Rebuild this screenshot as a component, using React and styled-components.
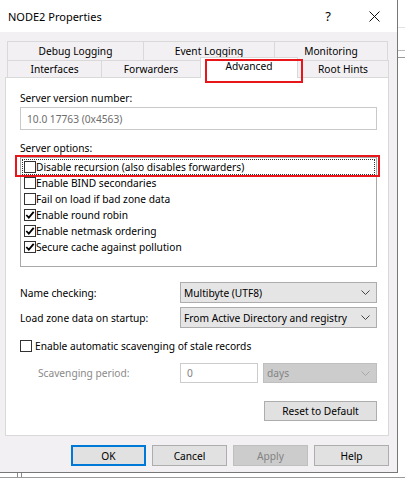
import React from 'react';
import styled, { createGlobalStyle, css } from 'styled-components';

const GlobalStyle = createGlobalStyle`
  body {
    margin: 0;
    background: #ffffff;
    font-family: "Noto Sans", "Open Sans", sans-serif;
    font-size: 10.2px;
    color: #000;
  }
`;

const Screen = styled.div`
  width: 405px;
  height: 479px;
  overflow: hidden;
  display: flex;
  flex-direction: column;
  background: #fff;
`;

const TopArea = styled.div`
  display: flex;
`;

const Dialog = styled.div`
  width: 397px;
  height: 472px;
  background: #f3f0f3;
  border-right: 1px solid #777777;
  border-bottom: 1px solid #777777;
  display: flex;
  flex-direction: column;
`;

// strip of the window that sits behind the dialog
const BackRight = styled.div`
  flex: 1;
  display: flex;
  flex-direction: column;
`;

const BackLine = styled.div`
  height: ${p => p.$h}px;
  border-bottom: 1px solid ${p => p.$c};
`;

const BackBottom = styled.div`
  flex: 1;
  display: flex;
  border-bottom: 1px solid #9a9a9a;
  margin-bottom: 1px;
`;

const BackCol = styled.div`
  width: ${p => p.$w}px;
  border-right: 1px solid #8a8a8a;
`;

const TitleBar = styled.div`
  height: 32px;
  background: #ffffff;
  display: flex;
  align-items: center;
  padding-left: 8px;
`;

const Title = styled.div`
  flex: 1;
  font-size: 11px;
`;

const CaptionButton = styled.div`
  width: 46px;
  height: 32px;
  display: flex;
  align-items: center;
  justify-content: center;
  font-size: 13px;
`;

const Body = styled.div`
  padding: 9px 8px 0 5px;
  display: flex;
  flex-direction: column;
`;

const TabStrip = styled.div`
  display: flex;
  flex-direction: column;
  padding-left: 2px;
`;

const TabRow = styled.div`
  display: flex;
  align-items: flex-end;
  height: ${p => p.$h}px;
`;

const Tab = styled.div`
  position: relative;
  box-sizing: border-box;
  width: ${p => p.$w}px;
  height: 100%;
  margin-left: -1px;
  border: 1px solid #d9d9d9;
  border-bottom: none;
  background: #f3f0f3;
  display: flex;
  align-items: center;
  justify-content: center;
  padding-bottom: 1px;
  white-space: nowrap;
  &:first-child { margin-left: 0; }
  ${p => p.$active && css`
    height: 21px;
    margin-bottom: -1px;
    background: #ffffff;
    z-index: 2;
    padding-bottom: 5px;
  `}
`;

const Annotation = styled.div`
  position: absolute;
  left: ${p => p.$l}px;
  top: ${p => p.$t}px;
  width: ${p => p.$w}px;
  height: ${p => p.$h}px;
  box-sizing: border-box;
  border: 2px solid #e8161b;
  pointer-events: none;
  z-index: 3;
`;

const Panel = styled.div`
  box-sizing: border-box;
  width: 384px;
  height: 359px;
  background: #ffffff;
  border: 1px solid #d9d9d9;
  padding: 12px 11px 0 14px;
  display: flex;
  flex-direction: column;
`;

const FieldLabel = styled.div`
  line-height: 16px;
  height: 16px;
  white-space: nowrap;
  color: ${p => (p.$dim ? '#8a8a8a' : '#000')};
  ${p => p.$indent && css`padding-left: ${p.$indent}px;`}
  ${p => p.$mt && css`margin-top: ${p.$mt}px;`}
`;

const ReadonlyBox = styled.div`
  box-sizing: border-box;
  height: 23px;
  margin-top: 1px;
  border: 1px solid #c9c9c9;
  background: #ffffff;
  color: #6d6d6d;
  padding-left: 6px;
  display: flex;
  align-items: center;
`;

const OptionList = styled.div`
  position: relative;
  box-sizing: border-box;
  height: 110px;
  margin-top: 1px;
  border: 1px solid #a8a8a8;
  padding: 1px;
  background: #fff;
`;

const OptionRow = styled.div`
  box-sizing: border-box;
  height: 16px;
  display: flex;
  align-items: center;
  padding-left: 1px;
  border: 1px solid transparent;
  white-space: nowrap;
  ${p => p.$focused && css`
    border: 1px dotted #333;
  `}
`;

const Box = styled.div`
  box-sizing: border-box;
  width: 12px;
  height: 12px;
  flex: none;
  border: 1px solid #333333;
  background: #fff;
  margin-right: ${p => p.$gap}px;
  display: flex;
  align-items: center;
  justify-content: center;
`;

const CheckBox = ({ checked, gap = 0 }) => (
  <Box $gap={gap}>
    {checked && (
      <svg width="10" height="10" viewBox="0 0 10 10">
        <path d="M1.3 5 L3.8 7.6 L8.7 1.8" fill="none" stroke="#000" strokeWidth="1.8" />
      </svg>
    )}
  </Box>
);

const FormRow = styled.div`
  display: grid;
  grid-template-columns: 160px minmax(0, 1fr);
  align-items: center;
  margin-top: ${p => p.$mt}px;
`;

const Select = styled.div`
  box-sizing: border-box;
  min-width: 0;
  overflow: hidden;
  height: ${p => p.$h || 21}px;
  margin-left: ${p => p.$ml || 0}px;
  border: 1px solid ${p => (p.$disabled ? '#bfbfbf' : '#adadad')};
  background: ${p => (p.$disabled ? '#cccccc' : '#e5e5e5')};
  color: ${p => (p.$disabled ? '#838383' : '#000')};
  display: flex;
  align-items: center;
  padding: 0 6px 0 3px;
  span { flex: 1; white-space: nowrap; overflow: hidden; }
`;

const Chevron = ({ color = '#444' }) => (
  <svg width="9" height="5" viewBox="0 0 9 5">
    <polyline points="0.5,0.5 4.5,4.5 8.5,0.5" fill="none" stroke={color} strokeWidth="1" />
  </svg>
);

const CheckLine = styled.div`
  display: flex;
  align-items: center;
  height: 16px;
  margin-top: 10px;
  white-space: nowrap;
`;

const PeriodRow = styled.div`
  display: grid;
  grid-template-columns: 160px 78px minmax(0, 1fr);
  align-items: center;
  margin-top: 9px;
`;

const NumberBox = styled.div`
  box-sizing: border-box;
  height: 20px;
  border: 1px solid #cccccc;
  background: #fff;
  color: #838383;
  padding-left: 6px;
  display: flex;
  align-items: center;
`;

const ResetRow = styled.div`
  display: flex;
  justify-content: flex-end;
  margin-top: 18px;
`;

const Button = styled.div`
  box-sizing: border-box;
  width: ${p => p.$w}px;
  height: ${p => p.$h}px;
  background: ${p => (p.$disabled ? '#cccccc' : '#e1e1e1')};
  border: 1px solid ${p => (p.$disabled ? '#bfbfbf' : '#adadad')};
  color: ${p => (p.$disabled ? '#838383' : '#000')};
  display: flex;
  align-items: center;
  justify-content: center;
  white-space: nowrap;
  ${p => p.$default && css`
    border: 2px solid #0078d7;
  `}
`;

const ButtonBar = styled.div`
  display: flex;
  justify-content: flex-end;
  gap: 6px;
  margin-top: 9px;
`;

const topTabs = [
  { label: 'Debug Logging', w: 137 },
  { label: 'Event Logging', w: 132 },
  { label: 'Monitoring', w: 114 },
];

const bottomTabs = [
  { label: 'Interfaces', w: 95 },
  { label: 'Forwarders', w: 100 },
  { label: 'Advanced', w: 98, active: true },
  { label: 'Root Hints', w: 92 },
];

const options = [
  { label: 'Disable recursion (also disables forwarders)', checked: false },
  { label: 'Enable BIND secondaries', checked: false },
  { label: 'Fail on load if bad zone data', checked: false },
  { label: 'Enable round robin', checked: true },
  { label: 'Enable netmask ordering', checked: true },
  { label: 'Secure cache against pollution', checked: true },
];

export default function App() {
  return (
    <Screen>
      <GlobalStyle />
      <TopArea>
        <Dialog>
          <TitleBar>
            <Title>NODE2 Properties</Title>
            <CaptionButton>?</CaptionButton>
            <CaptionButton>
              <svg width="11" height="11" viewBox="0 0 11 11">
                <path d="M0.5 0.5 L10.5 10.5 M10.5 0.5 L0.5 10.5" stroke="#111" strokeWidth="1" />
              </svg>
            </CaptionButton>
          </TitleBar>
          <Body>
            <TabStrip>
              <TabRow $h={19}>
                {topTabs.map(t => (
                  <Tab key={t.label} $w={t.w}>{t.label}</Tab>
                ))}
              </TabRow>
              <TabRow $h={17}>
                {bottomTabs.map(t => (
                  <Tab key={t.label} $w={t.w} $active={t.active}>
                    {t.label}
                    {t.active && <Annotation $l={4} $t={1} $w={98} $h={24} />}
                  </Tab>
                ))}
              </TabRow>
            </TabStrip>
            <Panel>
              <FieldLabel>Server version number:</FieldLabel>
              <ReadonlyBox>10.0 17763 (0x4563)</ReadonlyBox>
              <FieldLabel $mt={10}>Server options:</FieldLabel>
              <OptionList>
                <Annotation $l={-6} $t={-3} $w={365} $h={22} />
                {options.map((o, i) => (
                  <OptionRow key={o.label} $focused={i === 0}>
                    <CheckBox checked={o.checked} />
                    {o.label}
                  </OptionRow>
                ))}
              </OptionList>
              <FormRow $mt={15}>
                <span>Name checking:</span>
                <Select>
                  <span>Multibyte (UTF8)</span>
                  <Chevron />
                </Select>
              </FormRow>
              <FormRow $mt={4}>
                <span>Load zone data on startup:</span>
                <Select>
                  <span>From Active Directory and registry</span>
                  <Chevron />
                </Select>
              </FormRow>
              <CheckLine>
                <CheckBox gap={3} />
                Enable automatic scavenging of stale records
              </CheckLine>
              <PeriodRow>
                <FieldLabel $dim $indent={18}>Scavenging period:</FieldLabel>
                <NumberBox>0</NumberBox>
                <Select $disabled $h={20} $ml={5}>
                  <span>days</span>
                  <Chevron color="#a8a8a8" />
                </Select>
              </PeriodRow>
              <ResetRow>
                <Button $w={113} $h={20}>Reset to Default</Button>
              </ResetRow>
            </Panel>
            <ButtonBar>
              <Button $w={75} $h={21} $default>OK</Button>
              <Button $w={75} $h={21}>Cancel</Button>
              <Button $w={75} $h={21} $disabled>Apply</Button>
              <Button $w={75} $h={21}>Help</Button>
            </ButtonBar>
          </Body>
        </Dialog>
        <BackRight>
          <BackLine $h={27} $c="#e2e2e2" />
          <BackLine $h={22} $c="#b9b9b9" />
          <BackLine $h={6} $c="#9a9a9a" />
        </BackRight>
      </TopArea>
      <BackBottom>
        <BackCol $w={17} />
        <BackCol $w={3} />
      </BackBottom>
    </Screen>
  );
}
